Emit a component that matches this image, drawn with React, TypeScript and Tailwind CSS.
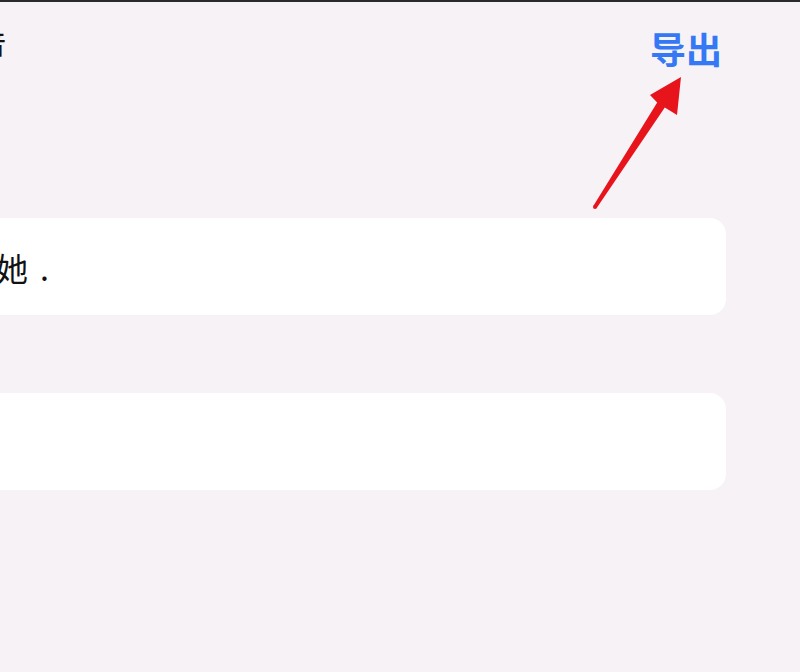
import React from "react";

export default function App() {
  const cjk = { fontFamily: '"Noto Sans CJK SC", "Noto Sans", sans-serif' };
  return (
    <div
      className="relative w-[800px] h-[672px] overflow-hidden bg-[#f6f2f6] border-t-2 border-[#2a2a2a]"
      style={cjk}
    >
      <div className="flex items-start justify-between pt-[28px] pr-[78px]">
        <div className="-ml-[20px] text-[26px] leading-none font-medium text-[#111]">音</div>
        <div className="text-[36px] leading-none font-semibold text-[#3478f6]">导出</div>
      </div>

      <div className="flex flex-col gap-[78px] mt-[152px] -ml-[20px] mr-[74px]">
        <div className="h-[97px] rounded-2xl bg-white flex items-center pl-[16px]">
          <span className="text-[32px] leading-none text-[#111]">
            她<span className="ml-[12px]">.</span>
          </span>
        </div>
        <div className="h-[97px] rounded-2xl bg-white" />
      </div>

      <svg
        className="absolute left-0 top-0 pointer-events-none"
        width="800"
        height="672"
        viewBox="0 0 800 672"
      >
        <polygon
          points="593.3,203.9 657.2,100.6 650,93 681,75 677,113 664.8,105.4 596.7,206.1"
          fill="#e8141c"
        />
        <circle cx="595" cy="205" r="2" fill="#e8141c" />
      </svg>
    </div>
  );
}
